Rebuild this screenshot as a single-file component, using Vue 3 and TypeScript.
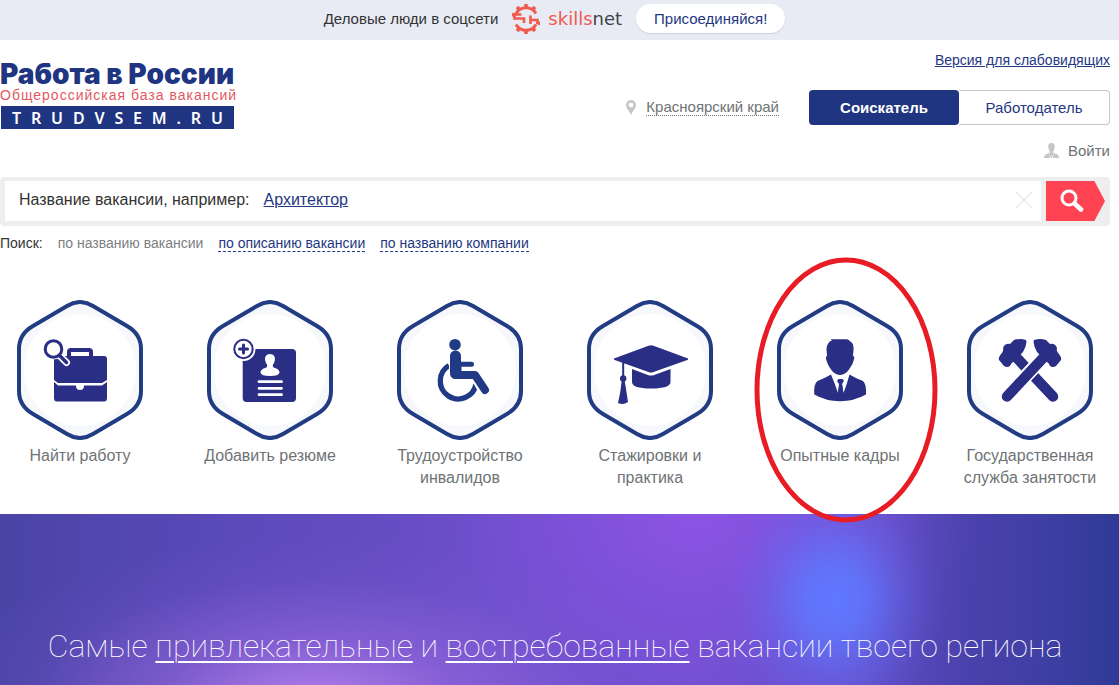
<script setup lang="ts">
import { ref } from 'vue'

interface Tile {
  id: string
  label: string
  marked?: boolean
}

const tiles: Tile[] = [
  { id: 'job', label: 'Найти работу' },
  { id: 'resume', label: 'Добавить резюме' },
  { id: 'access', label: 'Трудоустройство инвалидов' },
  { id: 'study', label: 'Стажировки и практика' },
  { id: 'senior', label: 'Опытные кадры', marked: true },
  { id: 'state', label: 'Государственная служба занятости' },
]

const domain = 'TRUDVSEM.RU'.split('')
const teeth = [0, 36, 72, 108, 144, 180, 216, 252, 288, 324]
const query = ref('')
</script>

<template>
  <div class="page">
    <aside class="promo">
      <span class="promo-text">Деловые люди в соцсети</span>
      <a href="#" class="skillsnet">
        <svg class="gear" viewBox="0 0 28 30" aria-hidden="true">
          <g fill="none" stroke="#f15b4e" stroke-width="3">
            <path d="M4 9.500A11.500 11.500 0 0 1 24 9.500" />
            <path d="M4 20.500A11.500 11.500 0 0 0 24 20.500" />
            <path d="M9.500 10.500H2.500V14.500H12V19" stroke-width="2.600" />
            <path d="M18.500 20V16H25.500V20M18.500 17V11.500" stroke-width="2.600" />
          </g>
          <g fill="#f15b4e">
            <template v-for="angle in teeth" :key="angle">
              <rect
                v-if="angle !== 72 && angle !== 252"
                x="12.200"
                y="0"
                width="3.600"
                height="4"
                :transform="`rotate(${angle} 14 15)`"
              />
            </template>
          </g>
        </svg>
        <span class="skillsnet-name"><span class="accent">skills</span>net</span>
      </a>
      <button type="button" class="join">Присоединяйся!</button>
    </aside>

    <div class="content">
      <header class="header">
        <a href="#" class="brand">
          <span class="brand-title">Работа в России</span>
          <span class="brand-sub">Общероссийская база вакансий</span>
          <span class="brand-domain"><span v-for="(letter, i) in domain" :key="i">{{ letter }}</span></span>
        </a>
        <div class="tools">
          <a href="#" class="vision">Версия для слабовидящих</a>
          <div class="switches">
            <a href="#" class="region">
              <svg viewBox="0 0 10 15" class="pin" aria-hidden="true">
                <path fill="#c6c6c6" fill-rule="evenodd" d="M5 0a5 5 0 0 1 5 5c0 3.500-3.500 6-5 10C3.500 11 0 8.500 0 5a5 5 0 0 1 5-5Zm0 2.700a2.400 2.400 0 1 0 0 4.800a2.400 2.400 0 0 0 0-4.800Z" />
              </svg>
              <span>Красноярский край</span>
            </a>
            <div class="roles">
              <button type="button" class="role active">Соискатель</button>
              <button type="button" class="role">Работодатель</button>
            </div>
          </div>
          <a href="#" class="login">
            <svg viewBox="0 0 15 15" class="user" aria-hidden="true">
              <path fill="#c6c6c6" d="M7.500 0C10 0 11 1.800 10.700 4.500C10.400 6.700 9.500 8 9.300 8.600V9.800L13.500 11.500Q15 12.500 15 15H0Q0 12.500 1.500 11.500L5.700 9.800V8.600C5.500 8 4.600 6.700 4.300 4.500C4 1.800 5 0 7.500 0Z" />
              <path fill="#fff" d="M5.500 10L7 15H6ZM9.500 10L8 15H9Z" />
            </svg>
            <span>Войти</span>
          </a>
        </div>
      </header>

      <form class="search" @submit.prevent>
        <div class="field">
          <label for="query">Название вакансии, например:</label>
          <a href="#" class="sample">Архитектор</a>
          <input id="query" v-model="query" type="text" />
          <button type="button" class="clear" aria-label="Очистить" @click="query = ''">
            <svg viewBox="0 0 16 16" aria-hidden="true">
              <path d="M0 0L16 16M16 0L0 16" stroke="#e6e6e6" stroke-width="1.200" />
            </svg>
          </button>
        </div>
        <button type="submit" class="submit" aria-label="Найти">
          <svg viewBox="0 0 24 24" aria-hidden="true">
            <g fill="none" stroke="#fff">
              <circle cx="9" cy="9" r="7" stroke-width="3" />
              <path d="M14.500 14.500L21 20.500" stroke-width="4.600" stroke-linecap="round" />
            </g>
          </svg>
        </button>
      </form>

      <nav class="scopes">
        <span class="scopes-title">Поиск:</span>
        <span class="scope-current">по названию вакансии</span>
        <a href="#">по описанию вакансии</a>
        <a href="#">по названию компании</a>
      </nav>

      <nav class="tiles">
        <a v-for="tile in tiles" :key="tile.id" href="#" class="tile">
          <svg class="tile-icon" viewBox="17 10 126 140" aria-hidden="true">
            <path
              d="M67 16Q80 8 93 16L127 36Q141 44 141 59V101Q141 116 127 124L93 144Q80 152 67 144L33 124Q19 116 19 101V59Q19 44 33 36Z"
              fill="#f7f8fc"
              stroke="#213c83"
              stroke-width="4"
            />
            <circle cx="80" cy="80" r="56" fill="#fff" />

            <g v-if="tile.id === 'job'" fill="#2a2e84">
              <path d="M69 67V62Q69 60 71 60H89Q91 60 91 62V67" fill="none" stroke="#2a2e84" stroke-width="4" />
              <path d="M57 66H104Q107 66 107 69V90L102 93H58L54 90V69Q54 66 57 66Z" />
              <path d="M54 92L58 95.500H76Q76 100 80 100Q84 100 84 95.500H102L107 92V108Q107 111.500 104 111.500H57Q54 111.500 54 108Z" />
              <path d="M60 66L66.500 72.500" stroke="#fff" stroke-width="7" stroke-linecap="round" />
              <circle cx="53.500" cy="59" r="10.500" fill="#fff" />
              <circle cx="53.500" cy="59" r="8.300" fill="#fff" stroke="#2a2e84" stroke-width="3" />
              <path d="M60 66L66.500 72.500" stroke="#2a2e84" stroke-width="3.600" stroke-linecap="round" />
            </g>

            <g v-else-if="tile.id === 'resume'" fill="#2a2e84">
              <rect x="52.700" y="59" width="53.300" height="53" rx="4" />
              <circle cx="53.500" cy="59" r="12" fill="#fff" />
              <circle cx="53.500" cy="59" r="9.200" fill="#fff" stroke="#2a2e84" stroke-width="2" />
              <path d="M53.500 55V63M49.500 59H57.500" stroke="#2a2e84" stroke-width="3" stroke-linecap="round" />
              <path fill="#fff" d="M80 64C84 64 85.500 67 84.800 70.500C84.300 73 83 74 82.700 75.500Q82.700 77.500 85 78Q89.500 79.500 89.500 82.500Q89 86 80 86Q71 86 70.500 82.500Q70.500 79.500 75 78Q77.300 77.500 77.300 75.500C77 74 75.700 73 75.200 70.500C74.500 67 76 64 80 64Z" />
              <path d="M69 91.700H91.500M69 98.300H91.500M69 104.700H91.500" stroke="#fff" stroke-width="2.800" stroke-linecap="round" />
            </g>

            <g v-else-if="tile.id === 'access'" fill="none" stroke="#203a86" stroke-linecap="round" stroke-linejoin="round">
              <path d="M69 75.500A18 18 0 1 0 96 94" stroke-width="5.300" stroke-linecap="butt" />
              <path d="M75.500 67V83.500H95.500L105 101" stroke="#fff" stroke-width="13" />
              <circle cx="75" cy="54.700" r="5.800" fill="#203a86" stroke="none" />
              <path d="M80 74.300H91.500" stroke-width="5" />
              <path d="M75.500 66V83.500M76 76V83" stroke-width="11" />
              <path d="M76 85H95L105 100" stroke-width="8" />
            </g>

            <g v-else-if="tile.id === 'study'" fill="#2a2e84">
              <path d="M44 68.500L78.500 55.700Q81 54.800 83.500 55.700L118 68.500V69.700L83.500 82Q81 83 78.500 82L44 69.700Z" />
              <path d="M62 79L78.500 85.200Q81 86 83.500 85.200L100.500 79V92Q100.500 98.500 81 98.500Q62 98.500 62 92Z" />
              <path d="M53.200 71V87" stroke="#2a2e84" stroke-width="2" />
              <circle cx="53.200" cy="88.500" r="3.200" />
              <path d="M51.700 91H54.700Q56.500 102 58 112Q53 115.500 48 113Q50.500 103 51.700 91Z" />
            </g>

            <g v-else-if="tile.id === 'senior'" fill="#2a2e84">
              <path d="M70.500 49.200H87Q89 49.500 90 51.200Q94 53 93.500 60L93 66Q95 66.500 94 69L92.700 73.500Q91.500 75.500 90 78Q86 85 80 85Q74 85 70 78Q68.500 75.500 67.500 73.500L66 69Q65.500 66.500 67 66L66.500 59Q67 52 72 50.500Z" />
              <path d="M54.300 104.500Q53.500 94 57.500 91Q64 88.500 71 84.500Q75 94 78 103L79 94L77 91L78.500 89H82.500L84 91L82 94L83.500 103Q87 94 89.500 84.500Q96 88.500 103 91Q106.500 94 106 104.500Q94 111.200 80 111.200Q66 111.200 54.300 104.500Z" />
              <path d="M79.500 94H82L83.500 104L80.500 108L77.700 104Z" />
            </g>

            <g v-else fill="#2a2e84" stroke-linecap="round">
              <g v-for="side in ['back', 'front']" :key="side" :transform="side === 'back' ? 'matrix(-1 0 0 1 160 0)' : undefined">
                <path v-if="side === 'front'" d="M57 106L92 69" stroke="#fff" stroke-width="14" />
                <path d="M57 106.500L94 67" stroke="#2a2e84" stroke-width="10.500" />
                <path d="M84 50Q90 48 96 50L100 54Q105 53 107 58Q106 61 109 64Q112 68 111 70L106 76Q103 78 100 76Q99 73 97 72L87 62Q84 57 83.500 52Z" />
              </g>
            </g>
          </svg>
          <span class="tile-label">{{ tile.label }}</span>
          <svg v-if="tile.marked" class="mark" viewBox="0 0 184 266" aria-hidden="true">
            <ellipse cx="92" cy="133" rx="89" ry="130" fill="none" stroke="#e81c24" stroke-width="5" />
          </svg>
        </a>
      </nav>
    </div>

    <section class="banner">
      <p>
        Самые <a href="#">привлекательные</a> и <a href="#">востребованные</a> вакансии твоего региона
      </p>
    </section>
  </div>
</template>

<style>
body {
  margin: 0;
  background: #fff;
}
</style>

<style scoped>
.page {
  min-height: 100vh;
  display: flex;
  flex-direction: column;
  overflow: hidden;
  font-family: 'Liberation Sans', Arial, sans-serif;
  font-size: 15px;
  color: #333;
}

a {
  color: #243782;
}

button {
  font: inherit;
  border: 0;
  padding: 0;
  background: none;
  cursor: pointer;
}

.promo {
  height: 40px;
  display: flex;
  align-items: center;
  justify-content: center;
  padding: 0 10px 3px 0;
  box-sizing: border-box;
  background: #e8ebf4;
}

.skillsnet {
  display: flex;
  align-items: center;
  gap: 8px;
  margin: 0 14px;
  text-decoration: none;
  color: #414549;
}

.gear {
  width: 28px;
  height: 30px;
}

.skillsnet-name {
  font-family: 'DejaVu Sans', sans-serif;
  font-size: 18px;
}

.accent {
  color: #f15b4e;
}

.join {
  height: 29px;
  padding: 0 18px;
  border-radius: 15px;
  background: #fff;
  color: #243782;
  box-shadow: 0 1px 1px #ccd0da;
}

.content {
  margin-right: 9px;
}

.header {
  display: flex;
  justify-content: space-between;
  height: 137px;
}

.brand {
  width: 235px;
  padding-top: 20px;
  display: flex;
  flex-direction: column;
  text-decoration: none;
  white-space: nowrap;
}

.brand-title {
  font-family: Inter, sans-serif;
  font-weight: 900;
  font-size: 28px;
  line-height: 28px;
  color: #1f3582;
}

.brand-sub {
  font-size: 14px;
  line-height: 14px;
  letter-spacing: 1px;
  color: #e2585f;
}

.brand-domain {
  display: flex;
  justify-content: space-between;
  align-items: center;
  height: 23px;
  margin: 4px 1px 0;
  padding: 0 11px;
  background: #1f3582;
  color: #fff;
  font-family: 'Noto Sans', sans-serif;
  font-weight: 600;
  font-size: 16px;
  line-height: 20px;
}

.tools {
  display: flex;
  flex-direction: column;
  align-items: flex-end;
}

.vision {
  margin-top: 12px;
  line-height: 16px;
  font-size: 14px;
}

.switches {
  display: flex;
  align-items: center;
  gap: 30px;
  margin-top: 22px;
}

.region {
  display: flex;
  align-items: center;
  gap: 10px;
  color: #6f7375;
  text-decoration: none;
}

.region span {
  border-bottom: 1px dotted #6f7375;
  line-height: 16px;
}

.pin {
  width: 10px;
  height: 15px;
}

.roles {
  display: flex;
}

.role {
  width: 151px;
  height: 35px;
  box-sizing: border-box;
  border: 1px solid #c5c5c5;
  border-left: 0;
  border-radius: 0 4px 4px 0;
  color: #243782;
}

.role.active {
  width: 150px;
  border: 0;
  border-radius: 4px;
  background: #1f3582;
  color: #fff;
  font-weight: bold;
}

.login {
  display: flex;
  align-items: center;
  gap: 9px;
  margin-top: 17px;
  color: #6f7375;
  text-decoration: none;
}

.user {
  width: 15px;
  height: 15px;
}

.search {
  display: flex;
  gap: 5px;
  padding: 4px 5px 5px;
  height: 40px;
  border-radius: 4px;
  background: #eee;
}

.field {
  flex: 1;
  min-width: 0;
  display: flex;
  align-items: center;
  padding: 0 9px 2px 14px;
  background: #fff;
  font-size: 16px;
}

.sample {
  margin-left: 14px;
}

.field input {
  flex: 1;
  min-width: 0;
  border: 0;
  outline: 0;
  background: none;
  font: inherit;
}

.clear,
.clear svg {
  width: 16px;
  height: 16px;
  display: block;
}

.submit {
  width: 59px;
  background: #ff4353;
  clip-path: polygon(0 0, 82% 0, 100% 50%, 82% 100%, 0 100%);
  padding-right: 7px;
}

.submit svg {
  width: 24px;
  height: 24px;
  display: block;
  margin: 0 auto;
}

.scopes {
  display: flex;
  gap: 15px;
  margin-top: 9px;
  font-size: 14px;
  line-height: 16px;
}

.scope-current {
  color: #7c8082;
}

.scopes a {
  text-decoration: none;
  border-bottom: 1px dashed #243782;
}

.tiles {
  display: grid;
  grid-template-columns: repeat(6, 1fr);
  margin: 48px -15px 0;
}

.tile {
  position: relative;
  display: flex;
  flex-direction: column;
  align-items: center;
  gap: 5px;
  text-decoration: none;
  color: #6f7375;
  font-size: 16px;
  line-height: 22px;
  text-align: center;
}

.tile-icon {
  width: 126px;
  height: 140px;
}

.tile-label {
  max-width: 140px;
}

.mark {
  position: absolute;
  z-index: 1;
  top: -43px;
  left: 50%;
  width: 184px;
  height: 266px;
  margin-left: -86px;
  pointer-events: none;
}

.banner {
  flex: 1;
  min-height: 171px;
  margin-top: 25px;
  box-sizing: border-box;
  padding: 110px 9px 17px 0;
  color: #fff;
  background:
    radial-gradient(ellipse 110px 130px at 74.500% 50%, #5f78ff 0%, rgba(95, 120, 255, 0.850) 25%, rgba(95, 114, 250, 0.350) 60%, rgba(95, 110, 245, 0.080) 85%, rgba(95, 110, 245, 0) 100%),
    radial-gradient(ellipse 380px 170px at 28% 112%, rgba(184, 130, 238, 0.950) 0%, rgba(160, 110, 226, 0.500) 40%, rgba(140, 95, 220, 0.120) 75%, rgba(140, 95, 220, 0) 100%),
    radial-gradient(ellipse 300px 210px at 62% 0%, rgba(143, 84, 230, 0.900) 0%, rgba(136, 82, 226, 0.500) 45%, rgba(130, 82, 222, 0.100) 80%, rgba(130, 82, 222, 0) 100%),
    linear-gradient(90deg, #4a44a6 0%, #5c4abb 22%, #6c4fca 45%, #7350d2 62%, #6750cb 76%, #4a42ad 86%, #403fa4 93%, #2f3a96 100%);
}

.banner p {
  margin: 0;
  text-align: center;
  font-family: Roboto, sans-serif;
  font-weight: 100;
  font-size: 32px;
  line-height: 44px;
}

.banner a {
  color: #fff;
  text-underline-offset: 4px;
  text-decoration-thickness: 2px;
}
</style>
